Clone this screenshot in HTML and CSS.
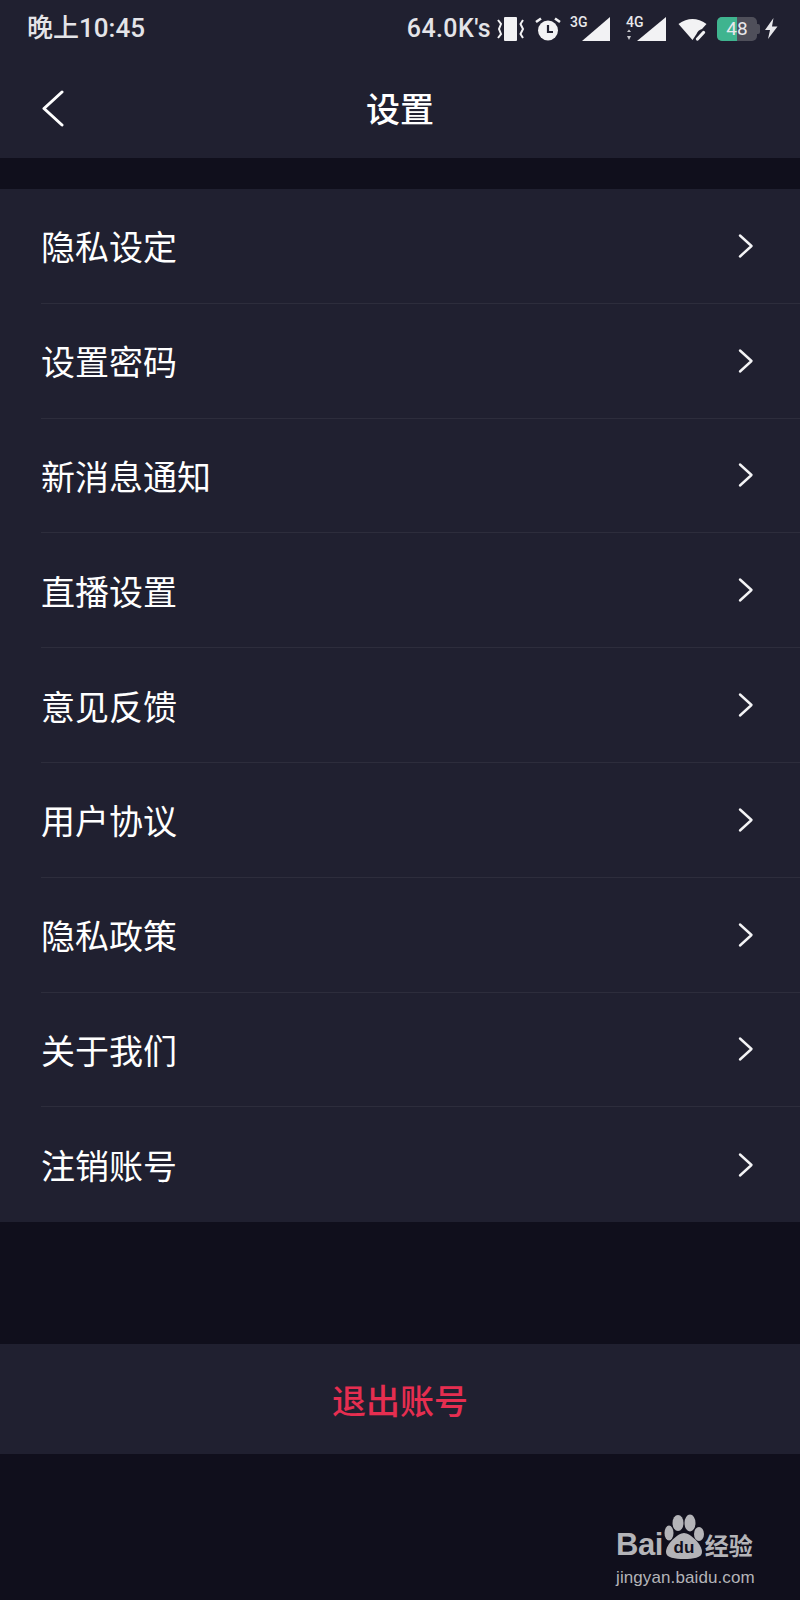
FILE: index.html
```html
<!DOCTYPE html>
<html lang="zh-CN">
<head>
    <meta charset="UTF-8">
    <title>设置</title>
    <link rel="stylesheet" href="styles.css">
</head>
<body>
    <div class="top">
        <div class="status-bar">
            <span class="time">晚上10:45</span>
            <div class="status-icons">
                <span class="speed">64.0K's</span>
                <svg class="ic-vibrate" width="28" height="24" viewBox="0 0 28 24"><rect x="7" y="0" width="13" height="24" rx="1" fill="#f2f2f4"/><path d="M1 3 L4 7 L2 12 L4 17 L1 21 M26 3 L23.5 7 L26 12 L23.5 17 L26 21" fill="none" stroke="#f2f2f4" stroke-width="2"/></svg>
                <svg class="ic-alarm" width="26" height="24" viewBox="0 0 26 24"><circle cx="13" cy="13.5" r="10" fill="#f2f2f4"/><path d="M13 8 V15 H18" fill="none" stroke="#202030" stroke-width="2.2"/><path d="M1 5 L6 1.5 M25 5 L20 1.5" stroke="#f2f2f4" stroke-width="2.6"/></svg>
                <div class="signal signal-3g">
                    <span class="net">3G</span>
                    <svg width="40" height="24" viewBox="0 0 40 24"><path d="M40 0 V24 H12 Z" fill="#f2f2f4"/></svg>
                </div>
                <div class="signal signal-4g">
                    <span class="net">4G</span>
                    <svg width="40" height="24" viewBox="0 0 40 24"><path d="M40 0 V24 H11 Z" fill="#f2f2f4"/><path d="M1 15 L3 12.5 L5 15 Z M1 19 H5 L3 23 Z" fill="#c8c8cc"/></svg>
                </div>
                <svg class="ic-wifi" width="29" height="24" viewBox="0 0 29 24"><path d="M0.5 7 Q14.5 -3 28.5 7 L24 12 Q20 13 18.5 17 L14.5 23 Z" fill="#f2f2f4"/><path d="M19.5 22 L25.5 15.5" stroke="#f2f2f4" stroke-width="3.2" stroke-linecap="round"/></svg>
                <div class="battery"><div class="battery-level" style="width:50%"></div><span class="battery-text">48</span></div>
                <svg class="ic-bolt" width="14" height="21" viewBox="0 0 14 21"><path d="M9.5 0 L1 12 H6 L4 21 L13.5 8.5 H8 Z" fill="#e8e8ec"/></svg>
            </div>
        </div>
        <header class="nav-bar">
            <svg class="back" width="26" height="38" viewBox="0 0 26 38"><path d="M22 3 L4 19.5 L22 36" fill="none" stroke="#fff" stroke-width="3" stroke-linecap="round" stroke-linejoin="round"/></svg>
            <h1>设置</h1>
        </header>
    </div>

    <ul class="menu">
        <li class="menu-item"><span>隐私设定</span><svg class="arrow" width="16" height="26" viewBox="0 0 16 26"><path d="M2 2.5 L13.5 13 L2 23.5" fill="none" stroke="#f4f4f6" stroke-width="2.4" stroke-linecap="round" stroke-linejoin="round"/></svg></li>
        <li class="menu-item"><span>设置密码</span><svg class="arrow" width="16" height="26" viewBox="0 0 16 26"><path d="M2 2.5 L13.5 13 L2 23.5" fill="none" stroke="#f4f4f6" stroke-width="2.4" stroke-linecap="round" stroke-linejoin="round"/></svg></li>
        <li class="menu-item"><span>新消息通知</span><svg class="arrow" width="16" height="26" viewBox="0 0 16 26"><path d="M2 2.5 L13.5 13 L2 23.5" fill="none" stroke="#f4f4f6" stroke-width="2.4" stroke-linecap="round" stroke-linejoin="round"/></svg></li>
        <li class="menu-item"><span>直播设置</span><svg class="arrow" width="16" height="26" viewBox="0 0 16 26"><path d="M2 2.5 L13.5 13 L2 23.5" fill="none" stroke="#f4f4f6" stroke-width="2.4" stroke-linecap="round" stroke-linejoin="round"/></svg></li>
        <li class="menu-item"><span>意见反馈</span><svg class="arrow" width="16" height="26" viewBox="0 0 16 26"><path d="M2 2.5 L13.5 13 L2 23.5" fill="none" stroke="#f4f4f6" stroke-width="2.4" stroke-linecap="round" stroke-linejoin="round"/></svg></li>
        <li class="menu-item"><span>用户协议</span><svg class="arrow" width="16" height="26" viewBox="0 0 16 26"><path d="M2 2.5 L13.5 13 L2 23.5" fill="none" stroke="#f4f4f6" stroke-width="2.4" stroke-linecap="round" stroke-linejoin="round"/></svg></li>
        <li class="menu-item"><span>隐私政策</span><svg class="arrow" width="16" height="26" viewBox="0 0 16 26"><path d="M2 2.5 L13.5 13 L2 23.5" fill="none" stroke="#f4f4f6" stroke-width="2.4" stroke-linecap="round" stroke-linejoin="round"/></svg></li>
        <li class="menu-item"><span>关于我们</span><svg class="arrow" width="16" height="26" viewBox="0 0 16 26"><path d="M2 2.5 L13.5 13 L2 23.5" fill="none" stroke="#f4f4f6" stroke-width="2.4" stroke-linecap="round" stroke-linejoin="round"/></svg></li>
        <li class="menu-item"><span>注销账号</span><svg class="arrow" width="16" height="26" viewBox="0 0 16 26"><path d="M2 2.5 L13.5 13 L2 23.5" fill="none" stroke="#f4f4f6" stroke-width="2.4" stroke-linecap="round" stroke-linejoin="round"/></svg></li>
    </ul>

    <div class="logout">退出账号</div>

    <div class="watermark">
        <div class="wm-top">
            <span class="wm-bai">Bai</span>
            <svg class="wm-paw" width="42" height="46" viewBox="0 0 42 46">
                <ellipse cx="15" cy="9" rx="5.5" ry="8" fill="#b4b4b8"/>
                <ellipse cx="27" cy="9" rx="5.5" ry="8.5" fill="#b4b4b8"/>
                <ellipse cx="6" cy="19" rx="4.5" ry="7.5" fill="#b4b4b8"/>
                <ellipse cx="36" cy="20" rx="5" ry="7" fill="#b4b4b8"/>
                <path d="M21 19 C27 19 39 30 39 38 C39 44 30 45 21 45 C12 45 3 44 3 38 C3 30 15 19 21 19 Z" fill="#b4b4b8"/>
            </svg>
            <span class="wm-du">du</span>
            <span class="wm-cn">经验</span>
        </div>
        <div class="wm-url">jingyan.baidu.com</div>
    </div>
</body>
</html>
```

FILE: styles.css
```css
* {
    box-sizing: border-box;
}
html, body {
    margin: 0;
    padding: 0;
}
body {
    width: 800px;
    height: 1600px;
    position: relative;
    overflow: hidden;
    background: #100f1c;
    font-family: "Noto Sans CJK SC", "Noto Sans", sans-serif;
    color: #fff;
}
.top {
    height: 158px;
    background: #202030;
}
.status-bar {
    height: 58px;
    padding: 0 22px 0 27px;
    display: flex;
    justify-content: space-between;
    align-items: center;
    color: #e4e4e8;
}
.time {
    font-family: "Roboto", "Noto Sans CJK SC", sans-serif;
    font-size: 26px;
    font-weight: 500;
    line-height: 30px;
    padding-bottom: 2px;
}
.status-icons {
    display: flex;
    align-items: center;
    margin-top: -1px;
}
.status-icons svg {
    display: block;
}
.speed {
    font-family: "Roboto", sans-serif;
    font-size: 25px;
    font-weight: 500;
    letter-spacing: 0.4px;
}
.ic-vibrate {
    margin-left: 6px;
}
.ic-alarm {
    margin-left: 10px;
}
.signal {
    position: relative;
}
.signal-3g {
    margin-left: 9px;
}
.signal-4g {
    margin-left: 16px;
}
.net {
    position: absolute;
    left: 0;
    top: -2px;
    font-family: "Roboto", sans-serif;
    font-size: 14px;
    font-weight: 500;
    line-height: 14px;
    color: #e8e8ec;
}
.ic-wifi {
    margin-left: 12px;
}
.battery {
    position: relative;
    width: 40px;
    height: 24px;
    margin-left: 10px;
    border-radius: 5px;
    background: #4f4f5a;
}
.battery::after {
    content: "";
    position: absolute;
    right: -3px;
    top: 7px;
    width: 3px;
    height: 10px;
    border-radius: 0 2px 2px 0;
    background: #4f4f5a;
}
.battery-level {
    height: 100%;
    border-radius: 5px 0 0 5px;
    background: #3fb48f;
}
.battery-text {
    position: absolute;
    left: 0;
    right: 0;
    top: 0;
    line-height: 24px;
    text-align: center;
    font-family: "Roboto", sans-serif;
    font-size: 19px;
    color: #e8e8ec;
}
.ic-bolt {
    margin-left: 7px;
}
.nav-bar {
    position: relative;
    height: 100px;
    display: flex;
    align-items: center;
    justify-content: center;
}
.nav-bar h1 {
    margin: 0;
    font-size: 34px;
    font-weight: 500;
    line-height: 1;
}
.back {
    position: absolute;
    left: 40px;
    top: 31px;
}
.menu {
    list-style: none;
    margin: 31px 0 0;
    padding: 0;
    background: #202030;
}
.menu-item {
    height: 114.8px;
    margin-left: 41px;
    padding-right: 46px;
    display: flex;
    justify-content: space-between;
    align-items: center;
    font-size: 34px;
    border-bottom: 1px solid #2d2d3c;
}
.menu-item:last-child {
    border-bottom: none;
}
.arrow {
    display: block;
}
.logout {
    margin-top: 122px;
    height: 110px;
    background: #202030;
    display: flex;
    align-items: center;
    justify-content: center;
    font-size: 34px;
    font-weight: 500;
    color: #e62e50;
}
.watermark {
    position: absolute;
    left: 616px;
    top: 1514px;
    width: 160px;
    color: #b4b4b8;
}
.wm-top {
    position: relative;
    display: flex;
    align-items: flex-end;
    height: 46px;
}
.wm-bai {
    font-family: "Liberation Sans", sans-serif;
    font-weight: 700;
    font-size: 31px;
    line-height: 30px;
    letter-spacing: -0.5px;
}
.wm-paw {
    flex-shrink: 0;
}
.wm-du {
    position: absolute;
    left: 47px;
    width: 42px;
    bottom: 3px;
    text-align: center;
    font-family: "Liberation Sans", sans-serif;
    font-size: 17px;
    font-weight: 700;
    line-height: 18px;
    color: #100f1c;
}
.wm-cn {
    font-size: 24px;
    line-height: 30px;
    font-weight: 700;
}
.wm-url {
    margin-top: 7px;
    font-family: "Liberation Sans", sans-serif;
    font-size: 17px;
    line-height: 22px;
    letter-spacing: 0.1px;
    white-space: nowrap;
}
```
